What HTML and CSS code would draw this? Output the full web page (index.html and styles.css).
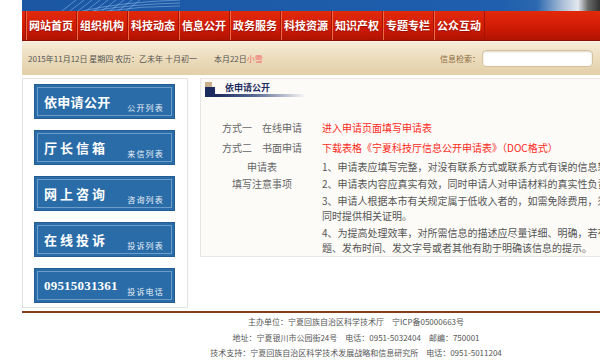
FILE: index.html
```html
<!DOCTYPE html>
<html lang="zh-CN">
<head>
  <meta charset="UTF-8">
  <meta name="viewport" content="width=device-width, initial-scale=1.0">
  <title>依申请公开 - 宁夏回族自治区科学技术厅</title>
  <link rel="stylesheet" href="styles.css">
</head>
<body>
  <div class="page">
    <div class="banner">
      <svg class="banner-net" width="120" height="11" viewBox="0 0 120 11">
        <path d="M0 11 L14 0 M8 11 L22 0 M16 11 L30 0 M24 11 L38 0 M32 11 L46 0 M40 11 L54 0 M48 11 L62 0 M56 11 L70 0 M64 11 L78 0" stroke="#7fb0e6" stroke-width="0.6" fill="none"/>
        <path d="M20 11 Q60 2 118 0 M30 11 Q70 4 118 3 M44 11 Q80 6 118 6" stroke="#9cc4ee" stroke-width="0.5" fill="none"/>
      </svg>
    </div>

    <ul class="nav">
      <li><a href="#">网站首页</a></li>
      <li><a href="#">组织机构</a></li>
      <li><a href="#">科技动态</a></li>
      <li><a href="#">信息公开</a></li>
      <li><a href="#">政务服务</a></li>
      <li><a href="#">科技资源</a></li>
      <li><a href="#">知识产权</a></li>
      <li><a href="#">专题专栏</a></li>
      <li><a href="#">公众互动</a></li>
    </ul>

    <div class="datebar">
      <span class="date">2015年11月12日 星期四 农历：乙未年 十月初一<span class="term">本月22日<em>小雪</em></span></span>
      <div class="search">
        <label>信息检索：</label>
        <input type="text">
      </div>
    </div>

    <div class="main">
      <div class="side">
        <a href="#" class="side-btn"><span class="side-title">依申请公开</span><span class="side-sub">公开列表</span></a>
        <a href="#" class="side-btn"><span class="side-title wide">厅长信箱</span><span class="side-sub">来信列表</span></a>
        <a href="#" class="side-btn"><span class="side-title wide">网上咨询</span><span class="side-sub">咨询列表</span></a>
        <a href="#" class="side-btn"><span class="side-title wide">在线投诉</span><span class="side-sub">投诉列表</span></a>
        <a href="#" class="side-btn"><span class="side-title phone">09515031361</span><span class="side-sub">投诉电话</span></a>
      </div>

      <div class="content">
        <div class="box-title">
          <span class="box-icon"></span>
          <h3>依申请公开</h3>
        </div>

        <div class="rows">
          <div class="row">
            <span class="label">方式一&emsp;在线申请</span>
            <a href="#" class="red">进入申请页面填写申请表</a>
          </div>
          <div class="row">
            <span class="label">方式二&emsp;书面申请</span>
            <a href="#" class="red">下载表格《宁夏科技厅信息公开申请表》（DOC格式）</a>
          </div>
          <div class="row notes-row">
            <span class="label">申请表<br>填写注意事项</span>
            <div class="notes">
              <p>1、申请表应填写完整，对没有联系方式或联系方式有误的信息恕不回复。</p>
              <p>2、申请表内容应真实有效，同时申请人对申请材料的真实性负责。</p>
              <p>3、申请人根据本市有关规定属于低收入者的，如需免除费用，须提出申请，<br>同时提供相关证明。</p>
              <p>4、为提高处理效率，对所需信息的描述应尽量详细、明确，若有可能，请提供该信息的标<br>题、发布时间、发文字号或者其他有助于明确该信息的提示。</p>
            </div>
          </div>
        </div>
      </div>
    </div>

    <div class="footer">
      <p>主办单位：宁夏回族自治区科学技术厅&emsp;宁ICP备05000663号</p>
      <p>地址：宁夏银川市公园街24号&emsp;电话：0951-5032404&emsp;邮编：750001</p>
      <p>技术支持：宁夏回族自治区科学技术发展战略和信息研究所&emsp;电话：0951-5011204</p>
    </div>
  </div>
</body>
</html>
```

FILE: styles.css
```css
html, body {
  overflow: hidden;
}
body {
  margin: 0;
  padding: 0;
  background-color: #ffffff;
  font-family: "Noto Sans CJK SC", "Noto Sans", sans-serif;
  color: #555555;
}
a {
  text-decoration: none;
}
.page {
  width: 668px;
  margin-left: 22px;
}

/* banner + nav */
.banner {
  height: 11px;
  background: linear-gradient(90deg, #1b57a3 0px, #1f5fad 480px, #2c68b0 515px, #a8bdd6 540px, #e3e9ef 556px, #6a6a6a 566px, #2a2a2a 580px, #5a4a44 592px, #d9a68c 600px, #1f5fad 620px);
}
.banner-net {
  display: block;
  margin-left: 40px;
}
.nav {
  list-style: none;
  margin: 0;
  padding: 0 0 0 3px;
  height: 30px;
  display: flex;
  background: linear-gradient(#e2290a, #d01c05 55%, #b01203);
  border-bottom: 1px solid #8e0e02;
  box-sizing: border-box;
}
.nav li {
  display: flex;
  align-items: center;
  border-left: 1px solid #a51202;
  box-shadow: inset 1px 0 0 #ef6a3e;
  padding: 0 3px 0 3px;
}
.nav li:last-child {
  border-right: 1px solid #a51202;
}
.nav a {
  color: #ffffff;
  font-size: 11px;
  font-weight: bold;
  line-height: 1;
  white-space: nowrap;
  text-shadow: 0 1px 1px rgba(100, 0, 0, 0.5);
}

/* date bar */
.datebar {
  height: 34px;
  display: flex;
  align-items: center;
  justify-content: space-between;
  padding-left: 6px;
  background: linear-gradient(#f6ecd9, #ecdcbc 50%, #e3cfa8);
  border-top: 1px solid #fbf4e6;
  box-sizing: border-box;
}
.date {
  font-size: 8px;
  color: #555555;
}
.term {
  margin-left: 17px;
}
.term em {
  font-style: normal;
  color: #f06a6a;
}
.search {
  display: flex;
  align-items: center;
  margin-right: 97px;
}
.search label {
  font-size: 8px;
  color: #8a6a3c;
  margin-right: 2px;
}
.search input {
  width: 111px;
  height: 17px;
  box-sizing: border-box;
  border: 1px solid #d6c39d;
  border-radius: 4px;
  background: #ffffff;
  box-shadow: inset 0 1px 2px rgba(120, 90, 40, 0.25);
  padding: 0;
}

/* main */
.main {
  display: flex;
  align-items: flex-start;
  gap: 12px;
  margin-top: 3px;
}
.side {
  width: 166px;
  flex-shrink: 0;
  box-sizing: border-box;
  border: 1px solid #e3e3e3;
  background: #ffffff;
  padding: 5px 12px 4px 11px;
  display: flex;
  flex-direction: column;
  gap: 11px;
}
.side-btn {
  height: 35px;
  display: flex;
  justify-content: space-between;
  align-items: center;
  padding: 0 10px 0 9px;
  background-color: #2a6ca8;
  border: 1px solid #235d93;
  box-shadow: inset 0 0 0 2px #2a6ca8, inset 0 0 0 3px #6d9dcb;
  color: #ffffff;
  box-sizing: border-box;
  white-space: nowrap;
}
.side-title {
  font-size: 13px;
  font-weight: bold;
  letter-spacing: 0.3px;
  line-height: 1;
  margin-top: -1px;
}
.side-title.wide {
  letter-spacing: 3px;
}
.side-title.phone {
  font-family: "Liberation Serif", serif;
  font-size: 13px;
  letter-spacing: 0.2px;
}
.side-sub {
  align-self: flex-end;
  margin-bottom: 6px;
  font-size: 8px;
  letter-spacing: 1.2px;
  line-height: 1;
  color: #e8f0f8;
}

.content {
  flex: 1;
  min-width: 0;
  height: 179px;
  box-sizing: border-box;
  border: 1px solid #e6e6e4;
  background: #fcfbf8;
  padding: 3px 4px 0 4px;
}
.box-title {
  position: relative;
  height: 12px;
  display: flex;
  align-items: flex-end;
  border-bottom: 3px solid transparent;
  border-image: linear-gradient(90deg, #1d2c5e 0px, #1d2c5e 12px, #5a6a95 50px, rgba(255,255,255,0) 100px) 1;
  width: 100px;
}
.box-icon {
  position: absolute;
  left: 0;
  top: 0;
  width: 7px;
  height: 5px;
  background: #c9b08a;
}
.box-title::before {
  content: "";
  position: absolute;
  left: 0;
  top: 5px;
  width: 10px;
  height: 7px;
  background: #1d2c5e;
}
.box-title h3 {
  margin: 0 0 0 20px;
  font-size: 9px;
  line-height: 11px;
  color: #1d2c5e;
  font-weight: bold;
  position: relative;
  top: -1px;
}

.rows {
  margin-top: 21px;
  padding-left: 17px;
}
.row {
  display: flex;
  gap: 20px;
  font-size: 10px;
  line-height: 20px;
}
.label {
  width: 80px;
  flex-shrink: 0;
  text-align: center;
  color: #666666;
  white-space: nowrap;
}
.red {
  color: #ff2a1a;
  white-space: nowrap;
}
.notes-row .label {
  line-height: 17px;
}
.notes p {
  margin: 0 0 2px 0;
  line-height: 15px;
  white-space: nowrap;
  color: #555555;
}
.notes {
  margin-top: 1px;
}

/* footer */
.footer {
  margin-top: 3px;
  border-top: 2px solid #853f20;
  text-align: center;
  padding-top: 1px;
}
.footer p {
  margin: 0;
  font-size: 8px;
  line-height: 15.5px;
  color: #555555;
}
```
